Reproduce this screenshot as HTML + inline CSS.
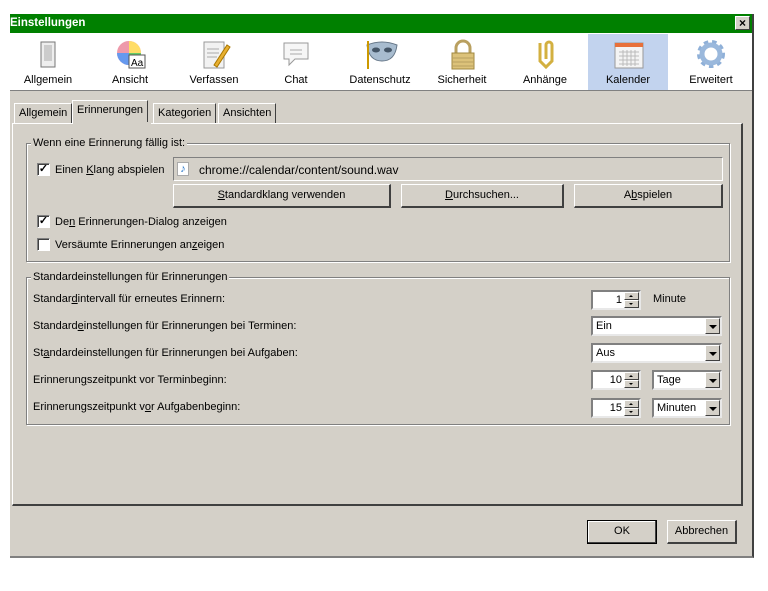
<!DOCTYPE html>
<html><head><meta charset="utf-8"><style>
*{box-sizing:border-box;margin:0;padding:0}
body{width:768px;height:591px;background:#fff;position:relative;overflow:hidden;font-family:"Liberation Sans",sans-serif;font-size:11px;color:#000}
.a{position:absolute}
.win{left:10px;top:14px;width:744px;height:544px;background:#d4d0c8;border-right:2px solid #404040;border-bottom:2px solid #808080}
.title{left:10px;top:14px;width:742px;height:19px;background:#008000;color:#fff;font-weight:bold;font-size:11.5px;line-height:19px;padding-left:0}
.close{left:735px;top:16px;width:15px;height:14px;background:#d4d0c8;border:1px solid #fff;border-right-color:#404040;border-bottom-color:#404040;font-size:12px;font-weight:bold;line-height:12px;text-align:center}
.tb{left:10px;top:33px;width:742px;height:58px;background:#fff;border-bottom:1px solid #808080}
.ti{top:34px;width:80px;height:56px;text-align:center}
.ti svg{position:absolute;left:25px;top:5px}
.ti span{position:absolute;left:0;right:0;top:40px}
.tab{height:21px;border:1px solid #fff;border-right:1px solid #404040;border-bottom:none;line-height:19px;padding:0 4px;background:#d4d0c8}
.panel{left:12px;top:123px;width:731px;height:383px;border:1px solid #fff;border-right:2px solid #404040;border-bottom:2px solid #404040}
.grp{border:1px solid #808080;box-shadow:1px 1px 0 #fff inset,1px 1px 0 #fff}
.leg{background:#d4d0c8;padding:0 2px;line-height:12px}
.cb{width:13px;height:13px;background:#fff;border:1px solid #808080;border-right-color:#fff;border-bottom-color:#fff;box-shadow:inset 1px 1px 0 #404040;font-size:11px;line-height:11px;text-align:center;font-weight:bold}
.btn{height:24px;border:1px solid #fff;border-right:2px solid #404040;border-bottom:2px solid #404040;text-align:center;line-height:21px;background:#d4d0c8}
.in{height:20px;background:#fff;border:2px solid #808080;border-right-color:#e8e8e8;border-bottom-color:#e8e8e8;line-height:16px;padding-left:3px}
.dd{position:absolute;right:0;top:0;width:15px;height:16px;background:#d4d0c8;border:1px solid #fff;border-right-color:#404040;border-bottom-color:#404040}
.dd:after{content:"";position:absolute;left:3px;top:6px;border:4px solid transparent;border-top:4px solid #000;border-bottom:0}
.sp{position:absolute;right:0;top:0;width:15px;height:16px;background:#d4d0c8}
.sp i{position:absolute;left:0;width:15px;height:8px;border:1px solid #fff;border-right-color:#404040;border-bottom-color:#404040}
.sp i:after{content:"";position:absolute;left:4px;top:2px;border:2px solid transparent}
.sp i.u:after{border-bottom:2px solid #000;border-top:0}
.sp i.d:after{border-top:2px solid #000;border-bottom:0}
u{text-decoration:underline}
</style></head><body>
<div class="a win"></div>
<div class="a title">Einstellungen</div>
<div class="a close">×</div>
<div class="a tb"></div>
<div class="a" style="left:588px;top:34px;width:80px;height:56px;background:#c2d3ee"></div>

<div class="a ti" style="left:8px"><svg width="30" height="32"><rect x="8" y="3" width="14" height="25" fill="#eee" stroke="#777"/><rect x="11" y="6" width="8" height="16" fill="#ccc"/></svg><span>Allgemein</span></div>
<div class="a ti" style="left:90px"><svg width="34" height="32"><circle cx="14" cy="14" r="12" fill="#e9a"/><path d="M14 14L14 2A12 12 0 0 1 26 14Z" fill="#fd6"/><path d="M14 14L26 14A12 12 0 0 1 14 26Z" fill="#6c6"/><path d="M14 14L14 26A12 12 0 0 1 2 14Z" fill="#69e"/><rect x="14" y="16" width="16" height="13" fill="#fff" stroke="#555"/><text x="16" y="27" font-size="10" font-family="Liberation Sans">Aa</text></svg><span>Ansicht</span></div>
<div class="a ti" style="left:174px"><svg width="32" height="32"><rect x="5" y="3" width="20" height="26" fill="#f2f2f2" stroke="#999"/><path d="M8 10h12M8 14h12M8 18h10" stroke="#aaa"/><path d="M15 26L28 6l3 2L18 28z" fill="#e8b030" stroke="#a70"/></svg><span>Verfassen</span></div>
<div class="a ti" style="left:256px"><svg width="32" height="32"><path d="M3 4h24v16H14l-6 6v-6H3z" fill="#f6f6f6" stroke="#999"/><path d="M9 11h12M9 15h12" stroke="#aaa"/></svg><span>Chat</span></div>
<div class="a ti" style="left:340px"><svg width="34" height="32"><path d="M2 6q15 -6 30 0q-2 16 -15 16q-13 0 -15 -16z" fill="#a8bccf" stroke="#678"/><ellipse cx="11" cy="11" rx="4" ry="2.5" fill="#456"/><ellipse cx="23" cy="11" rx="4" ry="2.5" fill="#456"/><path d="M3 2v28" stroke="#c90" stroke-width="2"/></svg><span>Datenschutz</span></div>
<div class="a ti" style="left:422px"><svg width="32" height="32"><path d="M9 14V9a7 7 0 0 1 14 0v5" fill="none" stroke="#b9a060" stroke-width="3"/><rect x="5" y="14" width="22" height="16" fill="#dcc27a" stroke="#a08840"/><path d="M5 19h22M5 23h22M5 27h22" stroke="#b9a060"/></svg><span>Sicherheit</span></div>
<div class="a ti" style="left:505px"><svg width="32" height="32"><path d="M10 4v18l6 6 6-6V6a3 3 0 0 0-6 0v14" fill="none" stroke="#d3b040" stroke-width="3"/></svg><span>Anhänge</span></div>
<div class="a ti" style="left:588px"><svg width="32" height="32"><rect x="2" y="4" width="28" height="25" fill="#f4f4f4" stroke="#999"/><rect x="2" y="4" width="28" height="4" fill="#e8703a"/><path d="M6 13h20M6 17h20M6 21h20M6 25h20M10 11v16M14 11v16M18 11v16M22 11v16" stroke="#bbb"/></svg><span>Kalender</span></div>
<div class="a ti" style="left:671px"><svg width="34" height="34"><circle cx="15" cy="15" r="11" fill="none" stroke="#8fb0d8" stroke-width="6" stroke-dasharray="4 3.5"/><circle cx="15" cy="15" r="9" fill="none" stroke="#9ab8dc" stroke-width="5"/><circle cx="15" cy="15" r="4" fill="#fff"/></svg><span>Erweitert</span></div>

<div class="a panel"></div>
<div class="a tab" style="left:14px;top:103px;height:20px">Allgemein</div>
<div class="a tab" style="left:72px;top:100px;height:24px;border-right:1px solid #404040;background:#d4d0c8">Erinnerungen</div>
<div class="a tab" style="left:153px;top:103px;height:20px">Kategorien</div>
<div class="a tab" style="left:218px;top:103px;height:20px">Ansichten</div>
<div class="a" style="left:73px;top:122px;width:78px;height:3px;background:#d4d0c8"></div>

<div class="a grp" style="left:26px;top:143px;width:704px;height:119px"></div>
<div class="a leg" style="left:31px;top:137px">Wenn eine Erinnerung fällig ist:</div>
<div class="a cb" style="left:37px;top:163px">✓</div><div class="a" style="left:55px;top:164px">Einen <u>K</u>lang abspielen</div>
<div class="a" style="left:173px;top:157px;width:550px;height:24px;border:1px solid #808080;border-right-color:#fff;border-bottom-color:#fff"></div>
<div class="a" style="left:177px;top:162px;width:12px;height:14px;background:#fff;border:1px solid #aaa;color:#2a78c8;font-size:11px;line-height:12px;text-align:center">♪</div>
<div class="a" style="left:199px;top:163px;font-size:12px">chrome://calendar/content/sound.wav</div>
<div class="a btn" style="left:173px;top:184px;width:218px"><u>S</u>tandardklang verwenden</div>
<div class="a btn" style="left:401px;top:184px;width:163px"><u>D</u>urchsuchen...</div>
<div class="a btn" style="left:574px;top:184px;width:149px">A<u>b</u>spielen</div>
<div class="a cb" style="left:37px;top:215px">✓</div><div class="a" style="left:55px;top:216px">De<u>n</u> Erinnerungen-Dialog anzeigen</div>
<div class="a cb" style="left:37px;top:238px"></div><div class="a" style="left:55px;top:239px">Versäumte Erinnerungen an<u>z</u>eigen</div>

<div class="a grp" style="left:26px;top:277px;width:704px;height:148px"></div>
<div class="a leg" style="left:31px;top:271px">Standardeinstellungen für Erinnerungen</div>
<div class="a" style="left:33px;top:293px">Standar<u>d</u>intervall für erneutes Erinnern:</div>
<div class="a" style="left:33px;top:320px">Standard<u>e</u>instellungen für Erinnerungen bei Terminen:</div>
<div class="a" style="left:33px;top:347px">St<u>a</u>ndardeinstellungen für Erinnerungen bei Aufgaben:</div>
<div class="a" style="left:33px;top:374px">Erinnerun<u>g</u>szeitpunkt vor Terminbeginn:</div>
<div class="a" style="left:33px;top:401px">Erinnerungszeitpunkt v<u>o</u>r Aufgabenbeginn:</div>

<div class="a in" style="left:591px;top:290px;width:50px;text-align:right;padding-right:17px">1<div class="sp"><i class="u" style="top:0"></i><i class="d" style="top:8px"></i></div></div>
<div class="a" style="left:653px;top:293px">Minute</div>
<div class="a in" style="left:591px;top:316px;width:131px">Ein<div class="dd"></div></div>
<div class="a in" style="left:591px;top:343px;width:131px">Aus<div class="dd"></div></div>
<div class="a in" style="left:591px;top:370px;width:50px;text-align:right;padding-right:17px">10<div class="sp"><i class="u" style="top:0"></i><i class="d" style="top:8px"></i></div></div>
<div class="a in" style="left:652px;top:370px;width:70px">Tage<div class="dd"></div></div>
<div class="a in" style="left:591px;top:398px;width:50px;text-align:right;padding-right:17px">15<div class="sp"><i class="u" style="top:0"></i><i class="d" style="top:8px"></i></div></div>
<div class="a in" style="left:652px;top:398px;width:70px">Minuten<div class="dd"></div></div>

<div class="a btn" style="left:587px;top:520px;width:70px;border:1px solid #000;box-shadow:inset -1px -1px 0 #404040,inset 1px 1px 0 #fff">OK</div>
<div class="a btn" style="left:667px;top:520px;width:70px">Abbrechen</div>
</body></html>
